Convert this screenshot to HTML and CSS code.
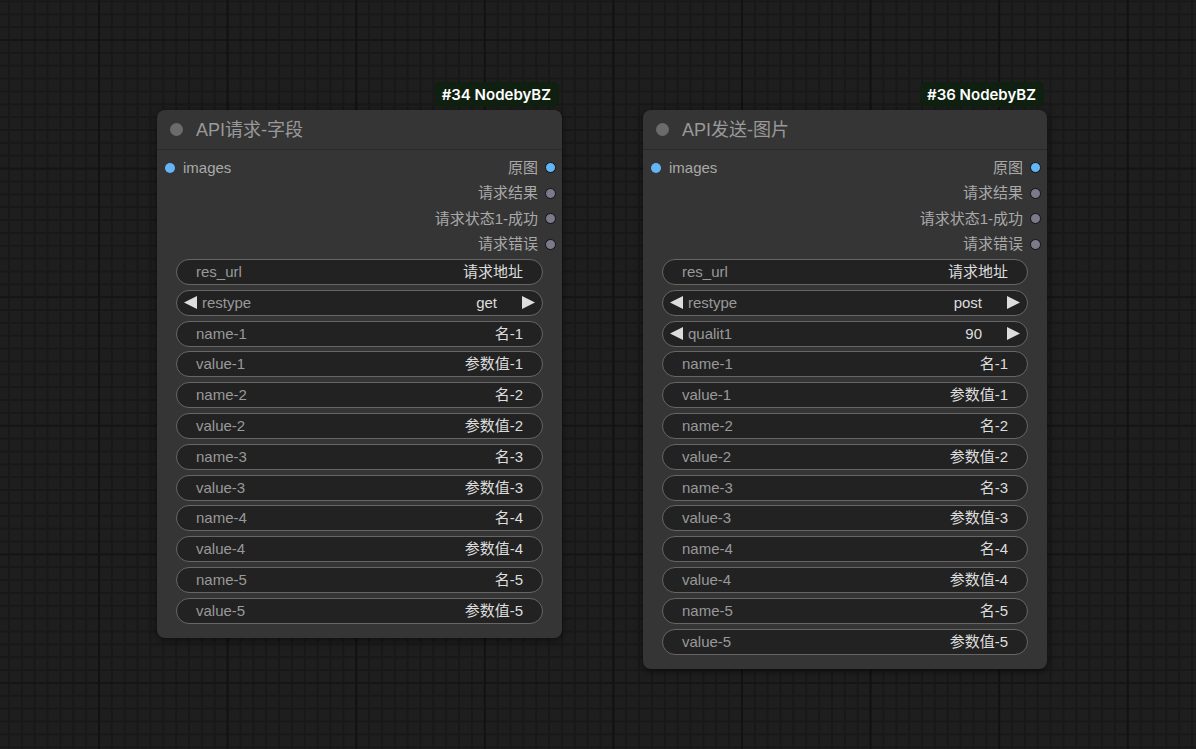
FILE: index.html
```html
<!DOCTYPE html>
<html lang="zh">
<head>
<meta charset="utf-8">
<title>Nodes</title>
<link rel="stylesheet" href="styles.css">
</head>
<body>
<div class="canvas">

  <div class="node node-a">
    <div class="badge">#34 NodebyBZ</div>
    <div class="title"><span class="title-dot"></span><span class="title-text">API请求-字段</span></div>
    <div class="slots">
      <div class="slot-row">
        <div class="in"><span class="dot blue nob"></span><span class="slot-label">images</span></div>
        <div class="out"><span class="slot-label">原图</span><span class="dot blue"></span></div>
      </div>
      <div class="slot-row end"><div class="out"><span class="slot-label">请求结果</span><span class="dot gray"></span></div></div>
      <div class="slot-row end"><div class="out"><span class="slot-label">请求状态1-成功</span><span class="dot gray"></span></div></div>
      <div class="slot-row end"><div class="out"><span class="slot-label">请求错误</span><span class="dot gray"></span></div></div>
    </div>
    <div class="widgets">
      <div class="widget"><span class="w-label">res_url</span><span class="w-value">请求地址</span></div>
      <div class="widget combo">
        <svg class="arrow" viewBox="0 0 13 13"><polygon points="13,0 13,13 0,6.5"/></svg>
        <span class="w-label grow">restype</span><span class="w-value">get</span>
        <svg class="arrow right" viewBox="0 0 13 13"><polygon points="0,0 0,13 13,6.5"/></svg>
      </div>
      <div class="widget"><span class="w-label">name-1</span><span class="w-value">名-1</span></div>
      <div class="widget"><span class="w-label">value-1</span><span class="w-value">参数值-1</span></div>
      <div class="widget"><span class="w-label">name-2</span><span class="w-value">名-2</span></div>
      <div class="widget"><span class="w-label">value-2</span><span class="w-value">参数值-2</span></div>
      <div class="widget"><span class="w-label">name-3</span><span class="w-value">名-3</span></div>
      <div class="widget"><span class="w-label">value-3</span><span class="w-value">参数值-3</span></div>
      <div class="widget"><span class="w-label">name-4</span><span class="w-value">名-4</span></div>
      <div class="widget"><span class="w-label">value-4</span><span class="w-value">参数值-4</span></div>
      <div class="widget"><span class="w-label">name-5</span><span class="w-value">名-5</span></div>
      <div class="widget"><span class="w-label">value-5</span><span class="w-value">参数值-5</span></div>
    </div>
  </div>

  <div class="node node-b">
    <div class="badge">#36 NodebyBZ</div>
    <div class="title"><span class="title-dot"></span><span class="title-text">API发送-图片</span></div>
    <div class="slots">
      <div class="slot-row">
        <div class="in"><span class="dot blue nob"></span><span class="slot-label">images</span></div>
        <div class="out"><span class="slot-label">原图</span><span class="dot blue"></span></div>
      </div>
      <div class="slot-row end"><div class="out"><span class="slot-label">请求结果</span><span class="dot gray"></span></div></div>
      <div class="slot-row end"><div class="out"><span class="slot-label">请求状态1-成功</span><span class="dot gray"></span></div></div>
      <div class="slot-row end"><div class="out"><span class="slot-label">请求错误</span><span class="dot gray"></span></div></div>
    </div>
    <div class="widgets">
      <div class="widget"><span class="w-label">res_url</span><span class="w-value">请求地址</span></div>
      <div class="widget combo">
        <svg class="arrow" viewBox="0 0 13 13"><polygon points="13,0 13,13 0,6.5"/></svg>
        <span class="w-label grow">restype</span><span class="w-value">post</span>
        <svg class="arrow right" viewBox="0 0 13 13"><polygon points="0,0 0,13 13,6.5"/></svg>
      </div>
      <div class="widget combo">
        <svg class="arrow" viewBox="0 0 13 13"><polygon points="13,0 13,13 0,6.5"/></svg>
        <span class="w-label grow">qualit1</span><span class="w-value">90</span>
        <svg class="arrow right" viewBox="0 0 13 13"><polygon points="0,0 0,13 13,6.5"/></svg>
      </div>
      <div class="widget"><span class="w-label">name-1</span><span class="w-value">名-1</span></div>
      <div class="widget"><span class="w-label">value-1</span><span class="w-value">参数值-1</span></div>
      <div class="widget"><span class="w-label">name-2</span><span class="w-value">名-2</span></div>
      <div class="widget"><span class="w-label">value-2</span><span class="w-value">参数值-2</span></div>
      <div class="widget"><span class="w-label">name-3</span><span class="w-value">名-3</span></div>
      <div class="widget"><span class="w-label">value-3</span><span class="w-value">参数值-3</span></div>
      <div class="widget"><span class="w-label">name-4</span><span class="w-value">名-4</span></div>
      <div class="widget"><span class="w-label">value-4</span><span class="w-value">参数值-4</span></div>
      <div class="widget"><span class="w-label">name-5</span><span class="w-value">名-5</span></div>
      <div class="widget"><span class="w-label">value-5</span><span class="w-value">参数值-5</span></div>
    </div>
  </div>

</div>
</body>
</html>
```

FILE: styles.css
```css
* { box-sizing: border-box; }
html, body { margin: 0; padding: 0; background: #1d1d1d; }

.canvas {
  position: relative;
  width: 1196px;
  height: 749px;
  overflow: hidden;
  font-family: "Liberation Sans", Arial, "Noto Sans CJK SC", sans-serif;
  background-color: #1e1e1e;
  background-image:
    linear-gradient(to right, #121212 0, #121212 2px, transparent 2px),
    linear-gradient(to bottom, #151515 0, #151515 2px, transparent 2px),
    linear-gradient(to right, #181818 0, #181818 1.6px, transparent 1.6px),
    linear-gradient(to bottom, #181818 0, #181818 1.6px, transparent 1.6px);
  background-size: 128.6px 100%, 100% 128.6px, 12.86px 100%, 100% 12.86px;
  background-position: 98px 0, 0 39px, 98px 0, 0 39px;
}

.node {
  position: absolute;
  width: 405px;
  background: #353535;
  border-radius: 8px;
  box-shadow: 0 2px 8px rgba(0, 0, 0, 0.55);
}
.node-a { left: 157px; top: 110px; }
.node-b { left: 643px; top: 110px; width: 404px; }

.badge {
  position: absolute;
  top: -28px;
  right: 3px;
  height: 25px;
  padding: 0 8px 0 7px;
  display: flex;
  align-items: center;
  background: #0f1f10;
  color: #ffffff;
  font-family: Inter, "Open Sans", sans-serif;
  font-weight: 600;
  font-size: 15px;
  border-radius: 5px;
  white-space: nowrap;
}

.title {
  height: 40px;
  display: flex;
  align-items: center;
  padding-left: 13px;
  border-bottom: 1px solid #2a2a2a;
}
.title-dot {
  width: 13px;
  height: 13px;
  border-radius: 50%;
  background: #6b6b6b;
  flex: none;
}
.title-text {
  margin-left: 13px;
  font-size: 18px;
  line-height: 20px;
  color: #999999;
}

.slots { padding-top: 5px; }
.slot-row {
  height: 25.5px;
  display: flex;
  align-items: center;
  justify-content: space-between;
}
.slot-row.end { justify-content: flex-end; }
.in { display: flex; align-items: center; padding-left: 8px; }
.out { display: flex; align-items: center; padding-right: 6px; }
.slot-label {
  font-size: 15px;
  line-height: 18px;
  color: #a9a9a9;
}
.in .slot-label { margin-left: 8px; }
.out .slot-label { margin-right: 7px; }

.dot {
  width: 11px;
  height: 11px;
  border-radius: 50%;
  border: 1.5px solid #111111;
  flex: none;
}
.dot.nob { width: 10px; height: 10px; border: none; }
.dot.blue { background: #64b5f6; }
.dot.gray { background: #7a7a8c; }

.widgets {
  display: flex;
  flex-direction: column;
  gap: 4.8px;
  padding: 2px 19px 14px 19px;
}
.widget {
  height: 26px;
  display: flex;
  align-items: center;
  justify-content: space-between;
  padding: 0 19px 0 19px;
  background: #222222;
  border: 1px solid #666666;
  border-radius: 13px;
  font-size: 15px;
  line-height: 18px;
}
.widget.combo { padding: 0 7px 0 7px; }
.w-label { color: #999999; white-space: nowrap; }
.w-value { color: #dddddd; white-space: nowrap; }
.combo .w-label { margin-left: 5px; }
.grow { flex: 1; }

.arrow {
  width: 13px;
  height: 13px;
  fill: #dddddd;
  flex: none;
}
.arrow.right { margin-left: 25px; }
```
